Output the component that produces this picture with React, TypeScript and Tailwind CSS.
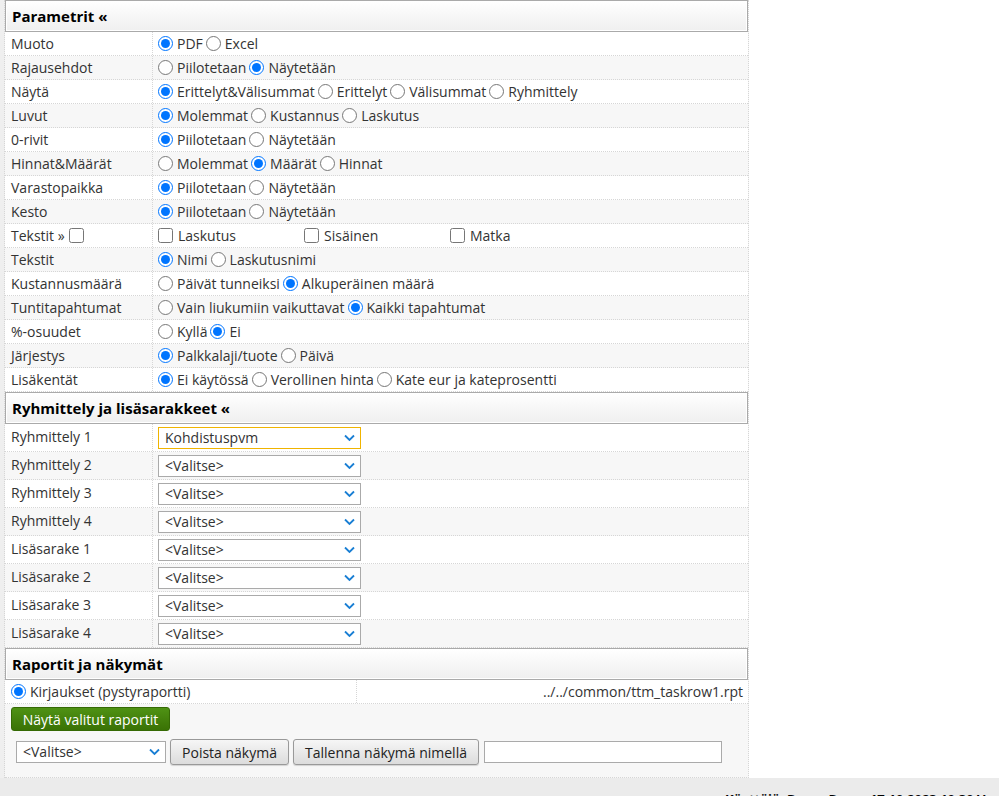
import React from "react";

// ---------------------------------------------------------------------------
// Data
// ---------------------------------------------------------------------------
type Opt = { label: string; checked?: boolean };
type ParamRow = { label: string; name: string; options: Opt[] };

const PARAMS_TOP: ParamRow[] = [
  { label: "Muoto", name: "muoto", options: [{ label: "PDF", checked: true }, { label: "Excel" }] },
  { label: "Rajausehdot", name: "rajaus", options: [{ label: "Piilotetaan" }, { label: "Näytetään", checked: true }] },
  {
    label: "Näytä",
    name: "nayta",
    options: [
      { label: "Erittelyt&Välisummat", checked: true },
      { label: "Erittelyt" },
      { label: "Välisummat" },
      { label: "Ryhmittely" },
    ],
  },
  {
    label: "Luvut",
    name: "luvut",
    options: [{ label: "Molemmat", checked: true }, { label: "Kustannus" }, { label: "Laskutus" }],
  },
  { label: "0-rivit", name: "nolla", options: [{ label: "Piilotetaan", checked: true }, { label: "Näytetään" }] },
  {
    label: "Hinnat&Määrät",
    name: "hinnat",
    options: [{ label: "Molemmat" }, { label: "Määrät", checked: true }, { label: "Hinnat" }],
  },
  { label: "Varastopaikka", name: "varasto", options: [{ label: "Piilotetaan", checked: true }, { label: "Näytetään" }] },
  { label: "Kesto", name: "kesto", options: [{ label: "Piilotetaan", checked: true }, { label: "Näytetään" }] },
];

const PARAMS_BOTTOM: ParamRow[] = [
  { label: "Tekstit", name: "tekstit", options: [{ label: "Nimi", checked: true }, { label: "Laskutusnimi" }] },
  {
    label: "Kustannusmäärä",
    name: "kustmaara",
    options: [{ label: "Päivät tunneiksi" }, { label: "Alkuperäinen määrä", checked: true }],
  },
  {
    label: "Tuntitapahtumat",
    name: "tunnit",
    options: [{ label: "Vain liukumiin vaikuttavat" }, { label: "Kaikki tapahtumat", checked: true }],
  },
  { label: "%-osuudet", name: "osuudet", options: [{ label: "Kyllä" }, { label: "Ei", checked: true }] },
  { label: "Järjestys", name: "jarjestys", options: [{ label: "Palkkalaji/tuote", checked: true }, { label: "Päivä" }] },
  {
    label: "Lisäkentät",
    name: "lisakentat",
    options: [
      { label: "Ei käytössä", checked: true },
      { label: "Verollinen hinta" },
      { label: "Kate eur ja kateprosentti" },
    ],
  },
];

const GROUP_ROWS = [
  { label: "Ryhmittely 1", value: "Kohdistuspvm", focused: true },
  { label: "Ryhmittely 2", value: "<Valitse>" },
  { label: "Ryhmittely 3", value: "<Valitse>" },
  { label: "Ryhmittely 4", value: "<Valitse>" },
  { label: "Lisäsarake 1", value: "<Valitse>" },
  { label: "Lisäsarake 2", value: "<Valitse>" },
  { label: "Lisäsarake 3", value: "<Valitse>" },
  { label: "Lisäsarake 4", value: "<Valitse>" },
];

// ---------------------------------------------------------------------------
// Small pieces
// ---------------------------------------------------------------------------
function SectionHeader({ title }: { title: string }) {
  return (
    <div className="h-[32px] border border-[#aaa] bg-gradient-to-b from-white to-[#efefef] px-[6px] flex items-center text-[15px] font-bold text-black shadow-[inset_0_0_0_1px_#fff]">
      {title}
    </div>
  );
}

function Radio({ name, label, checked }: { name: string; label: string; checked?: boolean }) {
  return (
    <label className="inline-flex items-center mr-[3px]">
      <input
        type="radio"
        name={name}
        defaultChecked={checked}
        className="m-0 mr-[4px] h-[15px] w-[15px]"
      />
      <span>{label}</span>
    </label>
  );
}

function Row({
  idx,
  label,
  children,
}: {
  idx: number;
  label: React.ReactNode;
  children: React.ReactNode;
}) {
  return (
    <div
      className={`flex h-[24px] border-b border-dotted border-[#d6d6d6] ${
        idx % 2 === 1 ? "bg-[#f7f7f7]" : "bg-white"
      }`}
    >
      <div className="w-[148px] shrink-0 pl-[6px] flex items-center border-r border-dotted border-[#d6d6d6]">
        {label}
      </div>
      <div className="flex-1 flex items-center pl-[5px]">{children}</div>
    </div>
  );
}

function Chevron() {
  return (
    <svg
      width="11"
      height="7"
      viewBox="0 0 11 7"
      className="pointer-events-none absolute right-[6px] top-1/2 -translate-y-1/2"
    >
      <path d="M1 1 L5.5 5.5 L10 1" fill="none" stroke="#1a7fd4" strokeWidth="1.8" />
    </svg>
  );
}

function Select({ value, width, focused }: { value: string; width: string; focused?: boolean }) {
  return (
    <div className={`relative ${width}`}>
      <select
        defaultValue={value}
        className={`appearance-none w-full h-[22px] bg-white pl-[6px] pr-[20px] text-[14px] leading-[20px] text-[#333] outline-none border ${
          focused ? "border-[#f0b400]" : "border-[#aaa]"
        }`}
      >
        <option>{value}</option>
      </select>
      <Chevron />
    </div>
  );
}

function GrayButton({ children, width }: { children: React.ReactNode; width: string }) {
  return (
    <button
      className={`${width} h-[26px] rounded-[3px] border border-[#999] bg-gradient-to-b from-[#f6f6f6] to-[#dcdcdc] text-[14px] text-[#222] shadow-[0_1px_1px_rgba(0,0,0,0.15)]`}
    >
      {children}
    </button>
  );
}

// ---------------------------------------------------------------------------
// Page
// ---------------------------------------------------------------------------
export default function App() {
  let i = 0;
  return (
    <div
      className="w-[999px] h-[796px] overflow-hidden bg-[#ebebeb] text-[14px] text-[#333]"
      style={{ fontFamily: '"Open Sans", "Liberation Sans", sans-serif' }}
    >
      <div className="flex h-[778px]">
        <div className="w-[5px] bg-[#efefef] border-r border-dotted border-[#d6d6d6]" />
        <div className="w-[744px] bg-[#f7f7f7] border-r border-dotted border-[#d6d6d6] border-b flex flex-col">
          {/* Parametrit */}
          <SectionHeader title="Parametrit «" />
          {PARAMS_TOP.map((r) => (
            <Row key={r.name} idx={i++} label={r.label}>
              {r.options.map((o) => (
                <Radio key={o.label} name={r.name} label={o.label} checked={o.checked} />
              ))}
            </Row>
          ))}
          <Row
            idx={i++}
            label={
              <label className="inline-flex items-center">
                Tekstit »
                <input type="checkbox" className="m-0 ml-[4px] h-[15px] w-[15px]" />
              </label>
            }
          >
            {["Laskutus", "Sisäinen", "Matka"].map((t) => (
              <label key={t} className="w-[146px] inline-flex items-center">
                <input type="checkbox" className="m-0 mr-[5px] h-[15px] w-[15px]" />
                {t}
              </label>
            ))}
          </Row>
          {PARAMS_BOTTOM.map((r) => (
            <Row key={r.name} idx={i++} label={r.label}>
              {r.options.map((o) => (
                <Radio key={o.label} name={r.name} label={o.label} checked={o.checked} />
              ))}
            </Row>
          ))}

          {/* Ryhmittely */}
          <SectionHeader title="Ryhmittely ja lisäsarakkeet «" />
          {GROUP_ROWS.map((g, k) => (
            <div
              key={g.label}
              className={`flex h-[28px] border-b border-dotted border-[#d6d6d6] ${
                k % 2 === 1 ? "bg-[#f7f7f7]" : "bg-white"
              }`}
            >
              <div className="w-[148px] shrink-0 pl-[6px] pb-[3px] flex items-center border-r border-dotted border-[#d6d6d6]">
                {g.label}
              </div>
              <div className="flex-1 flex items-center pl-[5px]">
                <Select value={g.value} width="w-[203px]" focused={g.focused} />
              </div>
            </div>
          ))}

          {/* Raportit */}
          <SectionHeader title="Raportit ja näkymät" />
          <div className="flex h-[24px] bg-white border-b border-dotted border-[#d6d6d6]">
            <div className="w-[352px] flex items-center pl-[6px] border-r border-dotted border-[#d6d6d6]">
              <input type="radio" defaultChecked name="raportti" className="m-0 mr-[4px] h-[15px] w-[15px]" />
              Kirjaukset (pystyraportti)
            </div>
            <div className="flex-1 flex items-center justify-end pr-[5px]">
              ../../common/ttm_taskrow1.rpt
            </div>
          </div>
          <div className="pl-[6px] pt-[3px]">
            <button className="h-[24px] w-[159px] rounded-[3px] bg-gradient-to-b from-[#4f9214] to-[#3a7205] border border-[#356a04] text-white text-[14px]">
              Näytä valitut raportit
            </button>
          </div>
          <div className="flex items-center gap-[4px] pl-[11px] pt-[8px]">
            <Select value="<Valitse>" width="w-[150px]" />
            <GrayButton width="w-[119px]">Poista näkymä</GrayButton>
            <GrayButton width="w-[186px]">Tallenna näkymä nimellä</GrayButton>
            <input type="text" className="ml-[1px] w-[238px] h-[22px] border border-[#aaa] bg-white outline-none" />
          </div>
        </div>
        <div className="flex-1 bg-white" />
      </div>
      <div className="h-[18px] relative">
        <div className="absolute left-[725px] top-[12px] whitespace-nowrap text-[13px] font-bold text-black">
          Käyttäjä: Demo Demo 17.10.2023 10:30 Versio: 5
        </div>
      </div>
    </div>
  );
}
